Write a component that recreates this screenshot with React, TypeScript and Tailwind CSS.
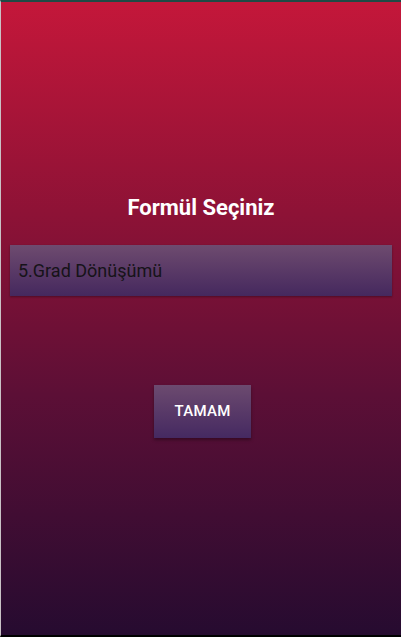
import React from "react";

export default function App() {
  return (
    <div
      className="w-[401px] h-[637px] flex flex-col border-t-2 border-t-[#1e4a45] border-l border-l-[#c9c2c6] border-b-2 border-b-black bg-[linear-gradient(to_bottom,#c4173a_0%,#8e1236_33%,#5c0f36_62%,#260b30_100%)]"
      style={{ fontFamily: "Roboto, 'Noto Sans', sans-serif" }}
    >
      <div className="h-[193px]" />
      <div className="text-center text-white font-bold text-[22px] leading-[26px]">Formül Seçiniz</div>
      <div className="h-[24px]" />
      <div className="mx-[9px] h-[51px] flex items-center pl-[8px] bg-[linear-gradient(to_bottom,#6e4b6f,#45285e)] shadow-[0_1px_2px_rgba(0,0,0,0.35)]">
        <span className="text-[#161318] text-[18px] leading-[22px]">5.Grad Dönüşümü</span>
      </div>
      <div className="h-[89px]" />
      <div className="flex justify-center pl-[3px]">
        <button className="w-[97px] h-[53px] flex items-center justify-center bg-[linear-gradient(to_bottom,#6c4a6f,#452961)] shadow-[0_2px_3px_rgba(0,0,0,0.35)] text-white font-medium text-[15px] tracking-[0.3px]">
          TAMAM
        </button>
      </div>
    </div>
  );
}
